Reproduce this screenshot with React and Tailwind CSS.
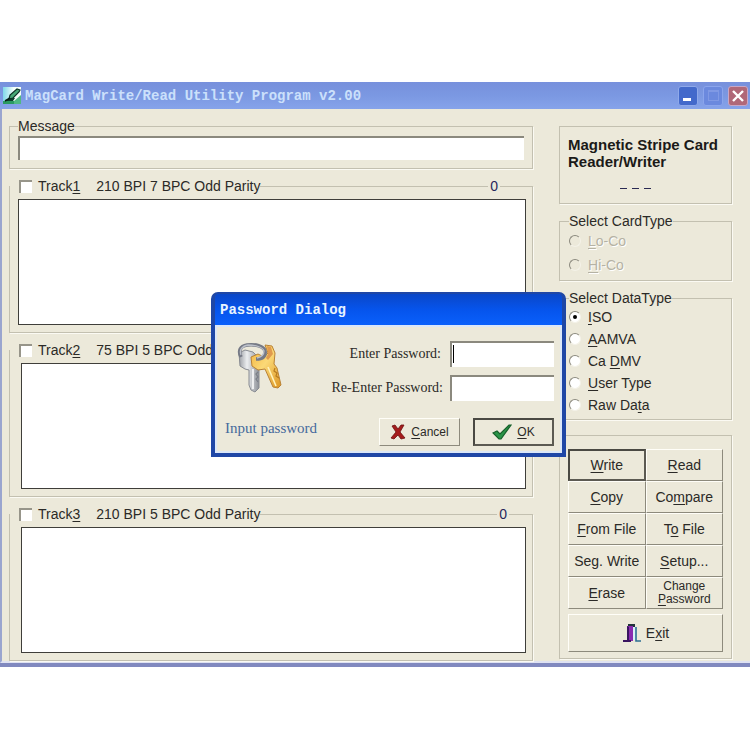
import React, { useState } from 'react';
import clsx from 'clsx';

const tracks = [
  { id: 1, format: '210 BPI 7 BPC Odd Parity', count: 0, pad: 'pl-[8px]', tail: 'w-[32px]' },
  { id: 2, format: '75 BPI 5 BPC Odd Parity', count: 0, pad: 'pl-[11px]', tail: 'w-[23px]' },
  { id: 3, format: '210 BPI 5 BPC Odd Parity', count: 0, pad: 'pl-[11px]', tail: 'w-[23px]' },
];

const cardTypes = ['&Lo-Co', '&Hi-Co'];
const dataTypes = ['&ISO', '&AAMVA', 'Ca &DMV', '&User Type', 'Raw Da&ta'];

const commands = [
  '&Write', '&Read',
  '&Copy', 'Co&mpare',
  '&From File', 'T&o File',
  'Seg. Write', '&Setup...',
  '&Erase', 'Change &Password',
];

const groupBox = 'min-w-0 border border-[#c3c0b0] shadow-[1px_1px_0_#fbfaf3]';
const raised = 'border border-t-[#fffef8] border-l-[#fffef8] border-r-[#8d8a7c] border-b-[#8d8a7c] bg-[#ece9da]';
const defaultButton = 'border-2 border-t-[#4a4943] border-l-[#4a4943] border-r-[#5c5a52] border-b-[#5c5a52] bg-[#ece9da]';
const sunken = 'border-t-2 border-l-2 border-t-[#8b897e] border-l-[#8b897e] bg-white outline-none';

// "&" marks the accelerator key, which is drawn underlined
function Accel({ text }) {
  const at = text.indexOf('&');
  if (at < 0) return <span>{text}</span>;
  return (
    <span>
      {text.slice(0, at)}
      <u className="underline-offset-2">{text[at + 1]}</u>
      {text.slice(at + 2)}
    </span>
  );
}

function AppIcon() {
  return (
    <svg className="h-[17px] w-[18px] shrink-0" viewBox="0 0 18 17">
      <defs>
        <linearGradient id="page" x1="0" y1="0" x2="1" y2="0">
          <stop offset="0" stopColor="#7fd8ea" />
          <stop offset=".6" stopColor="#f4fffa" />
        </linearGradient>
      </defs>
      <rect width="18" height="17" fill="url(#page)" />
      <path d="M0 14h18v3H0z" fill="#2a9a62" />
      <path d="M11 14l7-6v9h-7z" fill="#4fb883" />
      <path d="M3 14l3-3h6l-2 3z" fill="#0b3f2b" />
      <path d="M6 12l1-4 7-6 3 1-1 2-6 6z" fill="#46a876" stroke="#0c3326" strokeWidth="1.2" />
      <path d="M2 14l5-3" stroke="#081d17" strokeWidth="1.5" />
    </svg>
  );
}

function KeysIcon() {
  return (
    <svg className="h-[52px] w-[46px]" viewBox="0 0 46 52">
      <defs>
        <linearGradient id="silver" x1="0" y1="0" x2="1" y2="0">
          <stop offset="0" stopColor="#9b9ea4" />
          <stop offset=".4" stopColor="#eceef0" />
          <stop offset="1" stopColor="#8c9097" />
        </linearGradient>
        <linearGradient id="gold" x1="0" y1="0" x2="1" y2="1">
          <stop offset="0" stopColor="#f3b23c" />
          <stop offset=".45" stopColor="#fbd977" />
          <stop offset="1" stopColor="#dd9420" />
        </linearGradient>
      </defs>
      <path
        d="M2 12l6-3 8 2 6 6v30l-4 4-4-2-2-5V29l-4-1-5-3z"
        fill="url(#silver)"
        stroke="#888b92"
      />
      <path d="M16 28v20" stroke="#fff" strokeWidth="1.5" />
      <path d="M21 31l-2 2 2 3-2 2 2 3" fill="none" stroke="#7b7f87" strokeWidth="1.2" />
      <path
        d="M28 4l7 1 3 7-1 11 3 4 4 17-3 3-5-1-8-18-7 1-6-4-1-9 7-3 6 3 4-4z"
        fill="url(#gold)"
        stroke="#b98236"
      />
      <path d="M30 5l4 1 2 7-5 6-2-2 2-4z" fill="#e09a4d" />
      <path d="M31 26l8 19" stroke="#fff3bd" strokeWidth="1.6" />
      <path d="M38 27l-1 3 3 2-1 3 3 2" fill="none" stroke="#b77b1f" strokeWidth="1.2" />
      <path
        d="M4 16C1 10 3 5 10 4c8-1 17 1 18 6 1 5-2 8-9 8"
        fill="none"
        stroke="#757985"
        strokeWidth="3.6"
      />
      <path
        d="M4 14C2 9 5 5 11 4c7 0 15 2 16 6 0 3-2 6-7 7"
        fill="none"
        stroke="#bcc0c9"
        strokeWidth="1.3"
      />
    </svg>
  );
}

function CrossIcon() {
  return (
    <svg className="h-4 w-4" viewBox="0 0 16 16">
      <path d="M2 2l3-1 3 4 3-4 3 0-4 7 5 6-4 1-3-4-4 4-3-1 5-6z" fill="#a51c1c" stroke="#6d1010" strokeWidth=".8" />
    </svg>
  );
}

function CheckIcon() {
  return (
    <svg className="h-4 w-5" viewBox="0 0 20 16">
      <path d="M1 9l4-2 3 3 9-9 2 0-10 14H7z" fill="#2a9447" stroke="#17602b" strokeWidth="1.2" />
    </svg>
  );
}

function ExitIcon() {
  return (
    <svg className="h-5 w-5" viewBox="0 0 20 20">
      <path d="M6 1h7v3H6z" fill="#22333a" />
      <path d="M10 4h4v13h-4z" fill="#d9f1f7" />
      <path d="M5 3h6v15l-6 0z" fill="#8a2bb0" />
      <path d="M5 3l2 1v13l-2 1z" fill="#3a1560" />
      <path d="M14 4v14h5" fill="none" stroke="#2c6f93" strokeWidth="1.6" />
      <path d="M1 18h8" stroke="#3a1560" strokeWidth="2" />
    </svg>
  );
}

function TitleBar() {
  return (
    <header className="flex h-[27px] items-center bg-linear-to-b from-[#7790dc] via-[#7b98e2] to-[#86a3ea] pr-[2px] pl-[3px]">
      <AppIcon />
      <h1 className="ml-[4px] flex-1 font-[Liberation_Mono,monospace] text-[14px] font-bold whitespace-nowrap text-[#cbe0fb]">
        MagCard Write/Read Utility Program v2.00
      </h1>
      <div className="flex gap-[5px]">
        <button aria-label="Minimize" className="flex size-5 items-end rounded-[3px] border border-[#8fa9ea] bg-[#4369cb] p-[4px]">
          <span className="h-[3px] w-2 bg-white" />
        </button>
        <button aria-label="Maximize" disabled className="flex size-5 items-center justify-center rounded-[3px] border border-[#8ba5ec] bg-[#6b89de]">
          <span className="size-[11px] border border-t-2 border-[#8099e4]" />
        </button>
        <button aria-label="Close" className="flex size-5 items-center justify-center rounded-[3px] border border-[#c9a6c4] bg-[#b06878]">
          <svg className="size-3" viewBox="0 0 12 12">
            <path d="M1 1l10 10M11 1L1 11" stroke="#fff" strokeWidth="2.4" />
          </svg>
        </button>
      </div>
    </header>
  );
}

function Track({ track }) {
  const [checked, setChecked] = useState(false);
  return (
    <fieldset className={groupBox}>
      <legend className="flex h-4 w-full items-center pl-[9px] whitespace-nowrap">
        <label className="flex items-center gap-[6px]">
          <input
            type="checkbox"
            checked={checked}
            onChange={(e) => setChecked(e.target.checked)}
            className="size-[13px] appearance-none border-t-2 border-l-2 border-[#97958a] bg-white checked:bg-[#444]"
          />
          <Accel text={`Track&${track.id}`} />
        </label>
        <span className="ml-4">{track.format}</span>
        <span className="h-px flex-1 bg-[#c3c0b0]" />
        <output className="px-[2px] text-[#26265c]">{track.count}</output>
        <span className={clsx('h-px bg-[#c3c0b0]', track.tail)} />
      </legend>
      <div className={clsx('pt-[5px] pr-[6px] pb-[7px]', track.pad)}>
        <textarea
          aria-label={`Track ${track.id} data`}
          className="block h-[126px] w-full resize-none border border-[#3f3e3a] bg-white outline-none"
        />
      </div>
    </fieldset>
  );
}

function Radio({ name, text, checked, onChange, disabled }) {
  return (
    <label className={clsx('flex items-center gap-[7px]', disabled ? 'h-6 text-[#b5b2a4] [text-shadow:1px_1px_0_#fff]' : 'h-[22px]')}>
      <input
        type="radio"
        name={name}
        checked={checked}
        onChange={onChange}
        disabled={disabled}
        className={clsx(
          'flex size-3 appearance-none items-center justify-center rounded-full border border-t-[#8b897e] border-r-[#f4f2e8] border-b-[#f4f2e8] border-l-[#8b897e] before:size-1 before:rounded-full checked:before:bg-black',
          disabled ? 'bg-[#ece9da]' : 'bg-white'
        )}
      />
      <Accel text={text} />
    </label>
  );
}

function PasswordDialog() {
  return (
    <section
      role="dialog"
      aria-labelledby="dialog-title"
      className="absolute top-[210px] left-[211px] flex h-[165px] w-[355px] flex-col rounded-t-[7px] border-4 border-t-2 border-[#1f47a6] bg-[#0b50e0] font-[Liberation_Serif,serif] text-[14px]"
    >
      <header className="h-[31px] rounded-t-[4px] bg-linear-to-b from-[#0a47c8] via-[#0654ec] to-[#0a60fb] pl-[5px]">
        <h2 id="dialog-title" className="font-[Liberation_Mono,monospace] text-[14px] leading-[32px] font-bold text-[#e8f4ff]">
          Password Dialog
        </h2>
      </header>
      <form
        onSubmit={(e) => e.preventDefault()}
        className="flex flex-1 flex-col border-2 border-[#dbe7f8] bg-[#ece9da] pr-[6px] pl-[8px]"
      >
        <div className="flex flex-1 justify-between pt-[14px]">
          <div className="pl-[12px]">
            <KeysIcon />
          </div>
          <div className="flex flex-col gap-2">
            <div className="flex h-[26px] items-center justify-end gap-[9px]">
              <label htmlFor="password">Enter Password:</label>
              <div className="relative">
                <input id="password" type="password" className={clsx('block h-[26px] w-[104px] pl-[4px]', sunken)} />
                <span className="absolute top-[4px] left-[3px] h-[18px] w-px bg-black" />
              </div>
            </div>
            <div className="flex h-[26px] items-center justify-end gap-[7px]">
              <label htmlFor="password-again">Re-Enter Password:</label>
              <input id="password-again" type="password" className={clsx('block h-[26px] w-[104px] pl-[4px]', sunken)} />
            </div>
          </div>
        </div>
        <div className="flex items-center pb-[5px]">
          <p className="flex-1 pb-2 text-[15px] text-[#466a9c]">Input password</p>
          <div className="flex gap-[13px] font-[Liberation_Sans,sans-serif] text-[12px]">
            <button type="button" className={clsx('flex h-7 w-[81px] items-center justify-center gap-[5px]', raised)}>
              <CrossIcon />
              <Accel text="&Cancel" />
            </button>
            <button type="submit" className={clsx('flex h-7 w-[81px] items-center justify-center gap-[5px]', defaultButton)}>
              <CheckIcon />
              <Accel text="&OK" />
            </button>
          </div>
        </div>
      </form>
    </section>
  );
}

export default function App() {
  const [dataType, setDataType] = useState('&ISO');

  return (
    <div className="min-h-screen bg-white pt-[82px] font-[Liberation_Sans,sans-serif] text-[14px] leading-4 text-[#2b2a27]">
      <main className="relative border-b-4 border-b-[#8189bf] bg-[#ece9da]">
        <TitleBar />
        <div className="flex gap-[26px] border-b-2 border-l-2 border-b-[#dfe2f2] border-l-[#9aa5cf] pt-[9px] pr-[18px] pl-[7px]">
          <div className="flex min-w-0 flex-1 flex-col gap-[9px]">
            <fieldset className={groupBox}>
              <legend className="ml-[8px] h-4">
                <label htmlFor="message">Message</label>
              </legend>
              <div className="px-[8px] pt-[2px] pb-[8px]">
                <input id="message" type="text" className={clsx('block h-[24px] w-full px-1', sunken)} />
              </div>
            </fieldset>
            {tracks.map((track) => (
              <Track key={track.id} track={track} />
            ))}
          </div>

          <aside className="flex w-[173px] shrink-0 flex-col gap-[9px] pt-[8px]">
            <div className={clsx('h-[78px] pt-[9px] pl-[8px]', groupBox)}>
              <p className="text-[15px] leading-[17px] font-bold whitespace-nowrap text-[#1b1a18]">
                Magnetic Stripe Card
                <br />
                Reader/Writer
              </p>
              <div className="mt-[18px] flex justify-center gap-[5px] pr-[36px] pl-[8px]">
                <span className="h-px w-[7px] bg-[#2a2a52]" />
                <span className="h-px w-[7px] bg-[#2a2a52]" />
                <span className="h-px w-[7px] bg-[#2a2a52]" />
              </div>
            </div>

            <fieldset className={clsx('pb-[3px] pl-[9px]', groupBox)}>
              <legend className="h-4">Select CardType</legend>
              {cardTypes.map((type) => (
                <Radio key={type} name="card-type" text={type} checked={false} onChange={() => {}} disabled />
              ))}
            </fieldset>

            <fieldset className={clsx('pb-[3px] pl-[9px]', groupBox)}>
              <legend className="h-4">Select DataType</legend>
              {dataTypes.map((type) => (
                <Radio
                  key={type}
                  name="data-type"
                  text={type}
                  checked={dataType === type}
                  onChange={() => setDataType(type)}
                />
              ))}
            </fieldset>

            <div className={clsx('mt-[6px] px-[8px] pt-[13px] pb-[6px]', groupBox)}>
              <div className="grid auto-rows-[32px] grid-cols-2">
                {commands.map((command, i) => (
                  <button
                    key={command}
                    className={clsx(
                      i === 0 ? defaultButton : raised,
                      command.length > 12 && 'px-2 text-[12px] leading-[13px]'
                    )}
                  >
                    <Accel text={command} />
                  </button>
                ))}
              </div>
              <button className={clsx('mt-[5px] flex h-[38px] w-full items-center justify-center gap-1', raised)}>
                <ExitIcon />
                <Accel text="E&xit" />
              </button>
            </div>
          </aside>
        </div>
        <PasswordDialog />
      </main>
    </div>
  );
}
